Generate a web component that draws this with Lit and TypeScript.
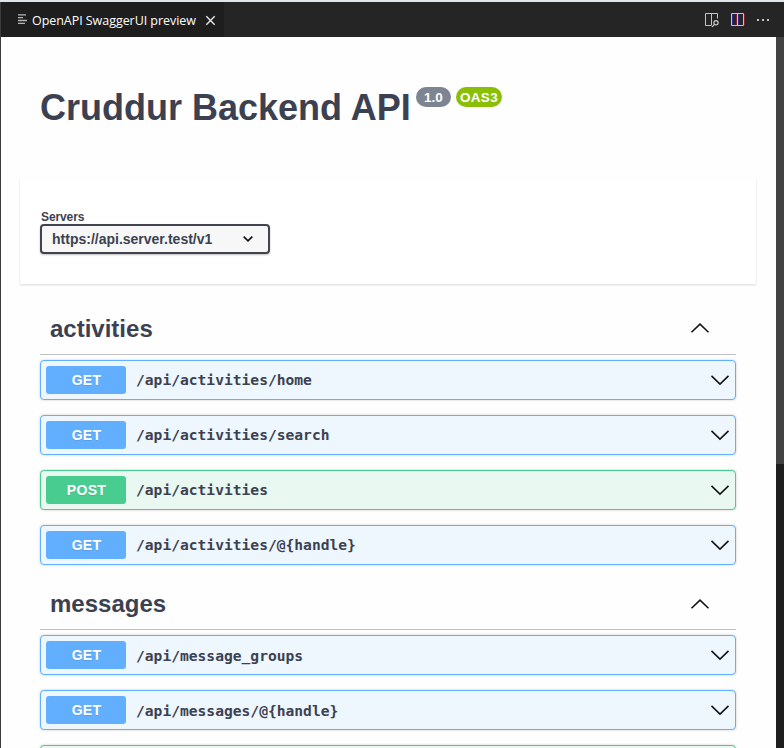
import { LitElement, html, css, svg, nothing } from "lit";
import { customElement, property } from "lit/decorators.js";
import { classMap } from "lit/directives/class-map.js";

type Operation = { method: "get" | "post"; path: string };
type Tag = { name: string; lowered: boolean; operations: Operation[] };

const TAGS: Tag[] = [
  {
    name: "activities",
    lowered: false,
    operations: [
      { method: "get", path: "/api/activities/home" },
      { method: "get", path: "/api/activities/search" },
      { method: "post", path: "/api/activities" },
      { method: "get", path: "/api/activities/@{handle}" },
    ],
  },
  {
    name: "messages",
    lowered: true,
    operations: [
      { method: "get", path: "/api/message_groups" },
      { method: "get", path: "/api/messages/@{handle}" },
      { method: "post", path: "" },
    ],
  },
];

const arrow = (up: boolean) => html`<svg width="20" height="12" viewBox="0 0 20 12">
  ${up
    ? svg`<path d="M1.5 10.3 10 2.1 18.5 10.3" fill="none" stroke="#111" stroke-width="1.5"/>`
    : svg`<path d="M1.5 1.9 10 10.1 18.5 1.9" fill="none" stroke="#111" stroke-width="1.5"/>`}
</svg>`;

@customElement("editor-bar")
export class EditorBar extends LitElement {
  static styles = css`
    :host { display: flex; height: 35px; background: #252526; flex: none; }
    .tab {
      display: flex; align-items: center; width: 223px; box-sizing: border-box;
      padding-left: 16px; background: #1e1e1e; color: #fff;
      font: 12.5px/35px "Open Sans", "Noto Sans", sans-serif;
    }
    svg { display: block; flex: none; }
    .label { width: 164px; margin: 1px 9px 0 5px; white-space: nowrap; letter-spacing: -0.05px; }
    .close { margin-top: 1px; }
    .actions { margin-left: auto; display: flex; align-items: center; gap: 10px; padding-right: 14px; }
  `;

  render() {
    return html`
      <div class="tab">
        <svg width="10" height="12" viewBox="0 0 10 12" stroke="#b4b4b4" stroke-width="1.3">
          <path d="M1 .9h8M1 3.6h5M1 6.5h9M1 9.4h7" />
        </svg>
        <span class="label">OpenAPI SwaggerUI preview</span>
        <svg class="close" width="11" height="11" viewBox="0 0 11 11" stroke="#e8e8e8" stroke-width="1.4">
          <path d="M1.3 1.3l8.4 8.4M9.7 1.3L1.3 9.7" />
        </svg>
      </div>
      <div class="actions">
        <svg width="16" height="16" viewBox="0 0 16 16" fill="none" stroke="#c5c5c5">
          <path d="M7 13.5H1.5v-12h12v5M7.5 1.5v12" />
          <circle cx="12" cy="10.8" r="2.1" stroke-width="1.2" />
          <path d="M10.5 12.3L8 14.8" stroke-width="1.2" />
        </svg>
        <svg width="16" height="16" viewBox="0 0 16 16" fill="none">
          <path d="M2.5 2v11M8.5 2v11" stroke="#2c2c90" />
          <path d="M6.5 2v11M14.5 2v11" stroke="#7d2028" />
          <path d="M1.5 1.5h12v12h-12zM7.5 1.5v12" stroke="#d8b4e6" />
        </svg>
        <svg width="14" height="16" viewBox="0 0 14 16" fill="#c5c5c5">
          <path d="M1 7h2v2H1zM6 7h2v2H6zM11 7h2v2h-2z" />
        </svg>
      </div>
    `;
  }
}

@customElement("api-operation")
export class ApiOperation extends LitElement {
  @property() method = "get";
  @property() path = "";
  @property({ type: Boolean }) lowered = false;

  static styles = css`
    :host { display: block; margin-bottom: 15px; }
    .row {
      display: flex; align-items: center; height: 40px; box-sizing: border-box;
      padding: 0 5px; border: 1px solid #61affe; border-radius: 4px;
      background: #eef6fe; box-shadow: 0 0 3px rgba(0, 0, 0, 0.19);
    }
    .post { border-color: #49cc90; background: #e9f8f1; }
    .method {
      width: 80px; height: 28px; border-radius: 3px; background: #61affe; color: #fff;
      text-align: center; text-shadow: 0 1px 0 rgba(0, 0, 0, 0.1);
      font: bold 14px/29px "Liberation Sans", sans-serif; text-indent: 1px; letter-spacing: 0.3px;
    }
    .post .method { background: #49cc90; }
    .path {
      padding-left: 10px; color: #3b4151; white-space: nowrap;
      font: bold 14.62px/20px "DejaVu Sans Mono", monospace;
    }
    .lowered .path { padding-top: 2px; }
    svg { display: block; margin-left: auto; }
  `;

  render() {
    return html`<div class=${classMap({ row: true, post: this.method === "post", lowered: this.lowered })}>
      ${this.path
        ? html`<span class="method">${this.method.toUpperCase()}</span>
            <span class="path">${this.path}</span>
            ${arrow(false)}`
        : nothing}
    </div>`;
  }
}

@customElement("app-root")
export class AppRoot extends LitElement {
  static styles = css`
    :host {
      display: flex; flex-direction: column; height: 748px; width: 784px; box-sizing: border-box;
      overflow: hidden; border-top: 2px solid #dfe5e8; background: #fefefe;
      color: #3b4151; font-family: "Liberation Sans", Arial, sans-serif;
    }
    .window { display: flex; flex-direction: column; flex: 1; min-height: 0; border-left: 1px solid #3c3c3e; }
    .body { display: flex; flex: 1; min-height: 0; }
    .page { flex: 1; overflow: hidden; padding: 0 20px 0 19px; }
    .scroll { width: 8px; background: #1e1e1e; }
    .thumb { height: 427px; background: #424242; }
    .info { display: flex; height: 142px; padding: 0 20px; box-sizing: border-box; }
    h1 { margin: 50px 0 0; width: 376px; font-size: 36px; line-height: 41px; white-space: nowrap; }
    .badge {
      height: 20px; margin: 50px 5px 0 0; border-radius: 10px; background: #7d8492; color: #fff;
      text-align: center; font: bold 13.5px/21px "Liberation Sans", sans-serif; width: 35px;
    }
    .oas { width: 46px; background: #89bf04; letter-spacing: 0.3px; }
    .servers {
      height: 105px; box-sizing: border-box; padding: 31px 20px 0; background: #fff;
      box-shadow: 0 1px 2px rgba(0, 0, 0, 0.15);
    }
    .caption { font: bold 12px/14px "Liberation Sans", sans-serif; padding-left: 1px; letter-spacing: -0.1px; }
    .select {
      display: flex; align-items: center; justify-content: space-between; width: 230px; height: 30px;
      box-sizing: border-box; padding: 0 15px 0 10px; border: 2px solid #41444e; border-radius: 4px;
      background: #f7f7f7; box-shadow: 0 1px 2px rgba(0, 0, 0, 0.25);
      font-weight: bold; font-size: 14px;
    }
    .tags { padding: 21px 20px 0; }
    .tag {
      display: flex; justify-content: space-between; align-items: flex-start; height: 50px;
      box-sizing: border-box; padding: 0 26px 0 10px; margin-bottom: 5px; border-bottom: 1px solid #bfc0c3;
    }
    h2 { margin: 10px 0 0; font-size: 24px; line-height: 28px; }
    .tag svg { margin-top: 17px; }
    .tag.lowered svg { margin-top: 18px; }
  `;

  render() {
    return html`
      <div class="window">
        <editor-bar></editor-bar>
        <div class="body">
          <main class="page">
            <header class="info">
              <h1>Cruddur Backend API</h1>
              <span class="badge">1.0</span>
              <span class="badge oas">OAS3</span>
            </header>
            <section class="servers">
              <div class="caption">Servers</div>
              <div class="select">
                <span>https://api.server.test/v1</span>
                <svg width="10" height="8" viewBox="0 0 10 8">
                  <path d="M.7 1.7L5 5.8 9.3 1.7" fill="none" stroke="#111" stroke-width="1.7" />
                </svg>
              </div>
            </section>
            <section class="tags">
              ${TAGS.map(
                (tag) => html`
                  <div class=${classMap({ tag: true, lowered: tag.lowered })}>
                    <h2>${tag.name}</h2>
                    ${arrow(true)}
                  </div>
                  ${tag.operations.map(
                    (op) => html`<api-operation .method=${op.method} .path=${op.path} .lowered=${tag.lowered}></api-operation>`
                  )}
                `
              )}
            </section>
          </main>
          <div class="scroll"><div class="thumb"></div></div>
        </div>
      </div>
    `;
  }
}
